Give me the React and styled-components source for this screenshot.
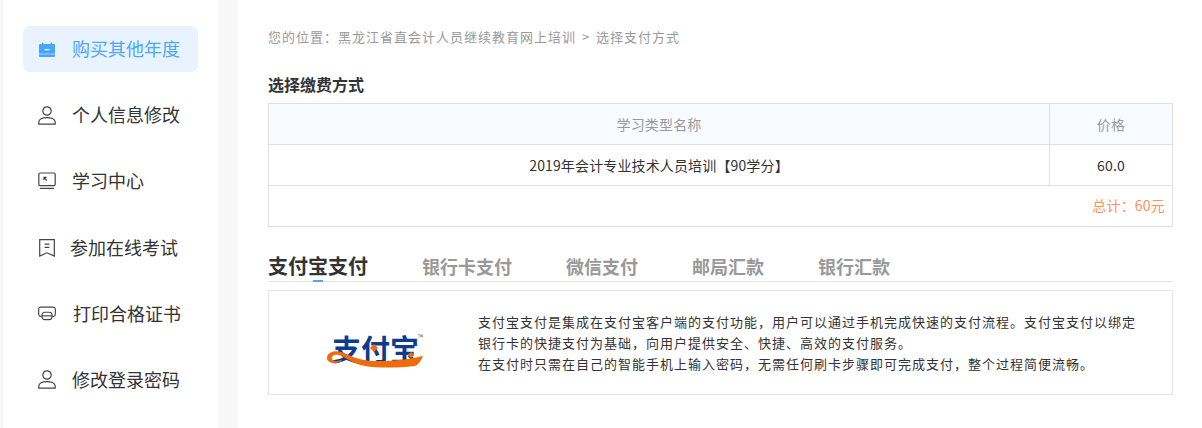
import React from "react";
import styled, { createGlobalStyle } from "styled-components";

const Global = createGlobalStyle`
  html, body { margin: 0; padding: 0; height: 428px; overflow: hidden; background: #fff; }
  body { font-family: "Noto Sans CJK SC", "Liberation Sans", sans-serif; }
  * { box-sizing: border-box; }
`;
const Page = styled.div`
  display: flex; height: 428px; width: 1202px; background: #f7f7f7; padding-left: 3px;
`;
const Sidebar = styled.nav`
  width: 215px; background: #fff; padding: 26px 20px 0; display: flex; flex-direction: column; gap: 20.2px;
`;
const NavItem = styled.div`
  height: 46px; width: 175px; flex: none; display: flex; align-items: center; border-radius: 7px;
  padding-left: 15px; position: relative;
  background: ${p => (p.$active ? "#e8f3ff" : "transparent")};
  color: ${p => (p.$active ? "#4ea5fb" : "#333")};
`;
const IconSlot = styled.span`
  width: 18px; height: 18px; display: flex; align-items: center; justify-content: center; flex: none;
`;
const NavLabel = styled.span`
  font-size: 18px; line-height: 24px; white-space: nowrap; margin-left: ${p => p.$gap}px;
  position: relative; top: -1px;
`;
const Main = styled.main`
  margin-left: 20px; flex: 1; background: #fff; padding: 27px 29px 0 30px; min-width: 0;
`;
const Crumb = styled.div`
  font-size: 13px; line-height: 20px; color: #999; white-space: nowrap; letter-spacing: 1px;
`;
const CrumbSep = styled.span`
  margin: 0 2px;
`;
const Heading = styled.h2`
  margin: 27px 0 0; font-size: 16px; line-height: 20px; font-weight: 700; color: #333;
`;
const Table = styled.div`
  margin-top: 9px; border: 1px solid #dfdfdf; display: flex; flex-direction: column;
`;
const Row = styled.div`
  display: grid; grid-template-columns: 780px 1fr; height: 41px; background: ${p => (p.$head ? "#f8fbff" : "#fff")};
  border-bottom: 1px solid #dfdfdf;
`;
const Cell = styled.div`
  display: flex; align-items: center; justify-content: center; font-size: 14px; letter-spacing: 0.14px;
  color: ${p => (p.$head ? "#999" : "#333")};
  & + & { border-left: 1px solid #dfdfdf; }
`;
const Total = styled.div`
  height: 40px; display: flex; align-items: center; justify-content: flex-end; padding: 0 7px 2px 0;
  font-size: 14px; color: #ff8e5c; letter-spacing: 0.2px;
`;
const Tabs = styled.div`
  margin-top: 26px; height: 29px; border-bottom: 1px solid #e3e3e3; display: flex; align-items: center; gap: 54px;
`;
const Tab = styled.div`
  position: relative; top: -1px; white-space: nowrap; font-weight: 700; line-height: 28px;
  font-size: ${p => (p.$active ? 20 : 18)}px;
  color: ${p => (p.$active ? "#333" : "#999")};
  ${p => p.$active && `
    &::after { content: ""; position: absolute; left: 45px; bottom: -2px; width: 10px; height: 2px; background: #4ea5fb; }
  `}
`;
const InfoBox = styled.section`
  margin-top: 8px; height: 105px; border: 1px solid #e6e6e6; display: flex; align-items: center;
`;
const LogoArea = styled.div`
  width: 209px; flex: none; display: flex; justify-content: center; padding: 14px 0 0 7px;
`;
const Logo = styled.div`
  position: relative; width: 100px; height: 36px;
`;
const LogoText = styled.span`
  position: absolute; left: 5px; top: 0; font-size: 29px; line-height: 32px; font-weight: 700;
  color: #0b3c8f; white-space: nowrap;
`;
const LogoMark = styled.span`
  position: absolute; left: 91px; top: 1px; font-size: 7px; line-height: 8px; color: #666;
`;
const LogoSwoosh = styled.svg`
  position: absolute; left: 0; top: 0;
`;
const Desc = styled.p`
  margin: 0; font-size: 13px; line-height: 21px; color: #333; white-space: nowrap; letter-spacing: 1px;
`;

const stroke = { fill: "none", stroke: "#444", strokeWidth: 1.2 };

const IconBuy = () => (
  <svg width="18" height="15" viewBox="0 0 18 15">
    <path d="M1 3a1 1 0 0 1 1-1h2V0.5h1.4V2h7.2V0.5H14V2h2a1 1 0 0 1 1 1v11a1 1 0 0 1-1 1H2a1 1 0 0 1-1-1z" fill="#46a6fb" />
    <rect x="6.5" y="7" width="5" height="1.2" fill="#fff" />
    <rect x="1" y="11.5" width="16" height="1" fill="#9fd2fd" />
  </svg>
);
const IconUser = () => (
  <svg width="18" height="19" viewBox="0 0 18 19" {...stroke}>
    <circle cx="9" cy="5" r="4.2" />
    <path d="M0.8 18.2v-2.2c0-2.6 3.4-4.4 8.2-4.4s8.2 1.8 8.2 4.4v2.2z" />
  </svg>
);
const IconScreen = () => (
  <svg width="18" height="18" viewBox="0 0 18 18" {...stroke}>
    <rect x="0.8" y="1" width="16.4" height="12.6" rx="1.4" />
    <path d="M2 16.4h14" />
    <path d="M8.8 8.5L6.2 5.6M6 8V5.4h2.6" />
  </svg>
);
const IconExam = () => (
  <svg width="16" height="18" viewBox="0 0 16 18" {...stroke}>
    <path d="M0.7 0.7h14.6v16.4L8 13.8 0.7 17.1z" />
    <path d="M5.6 5.2h4.8M5.6 8.4h4.8" />
  </svg>
);
const IconCert = () => (
  <svg width="19" height="15" viewBox="0 0 19 15" {...stroke}>
    <path d="M4 10.6H3a2.3 2.3 0 0 1-2.3-2.3V3A2.3 2.3 0 0 1 3 .7h13A2.3 2.3 0 0 1 18.3 3v5.3a2.3 2.3 0 0 1-2.3 2.3h-1" />
    <rect x="4.2" y="6.2" width="10.6" height="7.8" rx="3" />
    <path d="M4.6 10h9.8" />
  </svg>
);

const items = [
  { label: "购买其他年度", icon: <IconBuy />, gap: 16, active: true },
  { label: "个人信息修改", icon: <IconUser />, gap: 16 },
  { label: "学习中心", icon: <IconScreen />, gap: 16 },
  { label: "参加在线考试", icon: <IconExam />, gap: 14 },
  { label: "打印合格证书", icon: <IconCert />, gap: 17 },
  { label: "修改登录密码", icon: <IconUser />, gap: 16 },
];

export default function App() {
  return (
    <>
      <Global />
      <Page>
        <Sidebar>
          {items.map(it => (
            <NavItem key={it.label} $active={it.active}>
              <IconSlot>{it.icon}</IconSlot>
              <NavLabel $gap={it.gap}>{it.label}</NavLabel>
            </NavItem>
          ))}
        </Sidebar>
        <Main>
          <Crumb>您的位置：黑龙江省直会计人员继续教育网上培训 <CrumbSep>&gt;</CrumbSep> 选择支付方式</Crumb>
          <Heading>选择缴费方式</Heading>
          <Table>
            <Row $head>
              <Cell $head>学习类型名称</Cell>
              <Cell $head>价格</Cell>
            </Row>
            <Row>
              <Cell>2019年会计专业技术人员培训【90学分】</Cell>
              <Cell>60.0</Cell>
            </Row>
            <Total>总计：60元</Total>
          </Table>
          <Tabs>
            <Tab $active>支付宝支付</Tab>
            <Tab>银行卡支付</Tab>
            <Tab>微信支付</Tab>
            <Tab>邮局汇款</Tab>
            <Tab>银行汇款</Tab>
          </Tabs>
          <InfoBox>
            <LogoArea>
              <Logo>
                <LogoText>支付宝</LogoText>
                <LogoMark>™</LogoMark>
                <LogoSwoosh width="100" height="36" viewBox="0 0 100 36">
                  <path d="M0 26C0 20 8 18 14 20C24 23 30 29 50 29C68 29 84 27 96 24C94 29 91 33 88 34C70 36 50 36 38 34C26 32 18 25 12 23C7 22 4 24 5 27C6 29 10 30 14 28L15 29C10 32 0 32 0 26Z" fill="#ee6c0a" />
                  <path d="M47 12l4 4-4 4-4-4zM84 20l3.4 3-3.4 3-3.4-3z" fill="#ee6c0a" />
                </LogoSwoosh>
              </Logo>
            </LogoArea>
            <Desc>
              支付宝支付是集成在支付宝客户端的支付功能，用户可以通过手机完成快速的支付流程。支付宝支付以绑定
              <br />
              银行卡的快捷支付为基础，向用户提供安全、快捷、高效的支付服务。
              <br />
              在支付时只需在自己的智能手机上输入密码，无需任何刷卡步骤即可完成支付，整个过程简便流畅。
            </Desc>
          </InfoBox>
        </Main>
      </Page>
    </>
  );
}
